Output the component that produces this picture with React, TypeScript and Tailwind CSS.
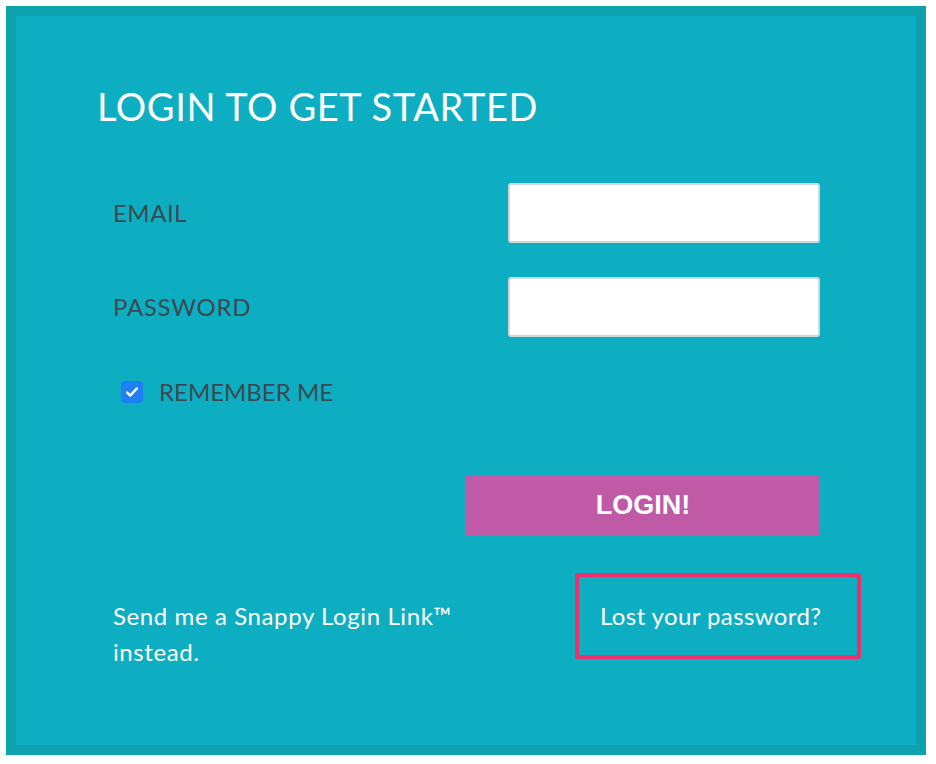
import React from "react";

const font = { fontFamily: "Lato, 'Open Sans', sans-serif" };

const App = () => {
  return (
    <div className="min-h-screen bg-white pt-[6px] pl-[6px]" style={font}>
      {/* login card */}
      <div className="w-[920px] h-[749px] border-[10px] border-[#0ea2ae] bg-[#0eaec2]">
        <h1 className="ml-[81px] mt-[67px] text-[38px] leading-[46px] text-white tracking-[0.6px]">
          LOGIN TO GET STARTED
        </h1>

        <div className="ml-[97px] mt-[54px] w-[707px]">
          {/* email */}
          <div className="flex h-[60px] items-center justify-between">
            <label className="text-[24px] text-[#3a4a50] tracking-[0.5px]">EMAIL</label>
            <input
              type="email"
              className="h-[60px] w-[312px] rounded-[3px] border-2 border-[#cfd6d8] bg-white outline-none"
            />
          </div>
          {/* password */}
          <div className="mt-[34px] flex h-[60px] items-center justify-between">
            <label className="text-[24px] text-[#3a4a50] tracking-[0.7px]">PASSWORD</label>
            <input
              type="password"
              className="h-[60px] w-[312px] rounded-[3px] border-2 border-[#cfd6d8] bg-white outline-none"
            />
          </div>
          {/* remember me */}
          <div className="mt-[40px] flex h-[30px] items-center">
            <span className="ml-[8px] flex h-[22px] w-[22px] items-center justify-center rounded-[4px] bg-[#1f7ff5]">
              <svg viewBox="0 0 16 16" className="h-[16px] w-[16px]" fill="none">
                <path d="M3.2 8.6l3 3 6.6-7.2" stroke="white" strokeWidth="2.4" strokeLinecap="round" strokeLinejoin="round" />
              </svg>
            </span>
            <span className="ml-[16px] text-[24px] text-[#3a4a50]">REMEMBER ME</span>
          </div>
          {/* submit */}
          <div className="mt-[68px] flex justify-end">
            <button
              className="h-[60px] w-[354px] bg-[#c05aa6] text-[27px] font-bold text-white"
              style={{ fontFamily: "'Liberation Sans', Arial, sans-serif" }}
            >
              LOGIN!
            </button>
          </div>
        </div>

        {/* links */}
        <div className="ml-[97px] mt-[38px] flex w-[748px] items-start justify-between">
          <p className="mt-[25px] w-[370px] text-[24px] leading-[36px] text-white tracking-[0.6px]">
            Send me a Snappy Login Link™ instead.
          </p>
          <div className="flex h-[86px] w-[286px] items-center rounded-[3px] border-4 border-[#ee2f6c] pl-[21px]">
            <span className="text-[24px] text-white tracking-[0.4px]">Lost your password?</span>
          </div>
        </div>
      </div>
    </div>
  );
};

export default App;
